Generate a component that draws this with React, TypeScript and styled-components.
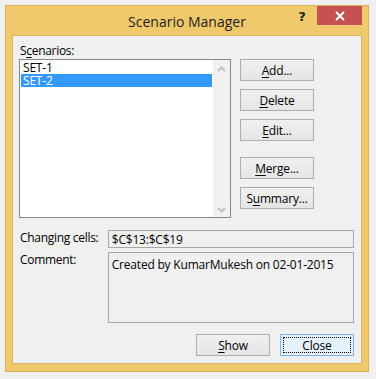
import React from 'react'
import styled, { createGlobalStyle } from 'styled-components'

const GlobalStyle = createGlobalStyle`
  html, body {
    margin: 0;
    padding: 0;
    background: #f0f0f0;
  }
  body {
    padding: 5px;
    font-family: 'Open Sans', 'Noto Sans', sans-serif;
    font-size: 12px;
    color: #000;
  }
`

const Window = styled.div`
  width: 364px;
  height: 367px;
  box-sizing: border-box;
  border: 1px solid #d8b155;
  background: #f0c96c;
  padding: 0 6px 7px 6px;
  display: flex;
  flex-direction: column;
`

const TitleBar = styled.div`
  height: 29px;
  display: flex;
  align-items: flex-start;
  position: relative;
`

const Title = styled.div`
  position: absolute;
  left: 0;
  right: 0;
  top: 6px;
  text-align: center;
  font-size: 14px;
  color: #1e1e1e;
`

const TitleButtons = styled.div`
  margin-left: auto;
  display: flex;
  align-items: flex-start;
  position: relative;
`

const HelpGlyph = styled.div`
  width: 30px;
  height: 19px;
  font-family: 'DejaVu Sans', sans-serif;
  font-weight: bold;
  font-size: 13px;
  line-height: 19px;
  text-align: center;
  color: #1e1e1e;
  margin-top: 1px;
  padding-left: 3px;
`

const CloseX = styled.div`
  width: 45px;
  height: 19px;
  background: #c75050;
  display: flex;
  align-items: center;
  justify-content: center;
`

const Client = styled.div`
  flex: 1;
  box-sizing: border-box;
  border: 1px solid #d9b563;
  background: #f0f0f0;
  padding: 7px 7px 0 6px;
  display: flex;
  flex-direction: column;
`

const Label = styled.div<{ $w?: number }>`
  line-height: 16px;
  white-space: nowrap;
  width: ${(p) => (p.$w ? `${p.$w}px` : 'auto')};
  padding-left: 1px;
  letter-spacing: -0.3px;
`

const Mn = styled.span`
  text-decoration: underline;
  text-underline-offset: 2px;
`

const TopRow = styled.div`
  display: flex;
  gap: 9px;
`

const ListBox = styled.div`
  width: 212px;
  height: 159px;
  box-sizing: border-box;
  border: 1px solid #828790;
  background: #fff;
  display: flex;
`

const ListItems = styled.div`
  flex: 1;
  padding: 1px 1px;
`

const ListItem = styled.div<{ $sel?: boolean }>`
  height: 13px;
  line-height: 13px;
  padding-left: 2px;
  letter-spacing: -0.2px;
  background: ${(p) => (p.$sel ? '#3399ff' : 'transparent')};
  color: ${(p) => (p.$sel ? '#fff' : '#000')};
`

const ScrollBar = styled.div`
  width: 17px;
  background: #f0f0f0;
  display: flex;
  flex-direction: column;
  justify-content: space-between;
  align-items: center;
  padding: 6px 0 4px;
`

const ButtonCol = styled.div`
  display: flex;
  flex-direction: column;
  gap: 8px;
`

const Btn = styled.div<{ $default?: boolean; $gapTop?: number }>`
  width: 74px;
  height: 22px;
  box-sizing: border-box;
  border: 1px solid ${(p) => (p.$default ? '#7eb4ea' : '#adadad')};
  background: ${(p) => (p.$default ? '#e5f1fb' : 'linear-gradient(#f0f0f0, #e5e5e5)')};
  display: flex;
  align-items: center;
  justify-content: center;
  position: relative;
  letter-spacing: -0.2px;
  margin-top: ${(p) => (p.$gapTop ? `${p.$gapTop}px` : '0')};
`

const FocusRect = styled.div`
  position: absolute;
  inset: 2px;
  border: 1px dotted #000;
`

const FieldRow = styled.div<{ $top: number }>`
  display: flex;
  margin-top: ${(p) => p.$top}px;
`

const Field = styled.div<{ $h: number }>`
  width: 247px;
  height: ${(p) => p.$h}px;
  box-sizing: border-box;
  border: 1px solid #a7a7a7;
  background: #f0f0f0;
  padding: 1px 3px;
  line-height: 15px;
  letter-spacing: -0.2px;
  white-space: nowrap;
`

const CommentText = styled.div`
  padding-top: 3px;
`

const Footer = styled.div`
  display: flex;
  justify-content: flex-end;
  gap: 10px;
  margin-top: 11px;
`

const Chevron: React.FC<{ up?: boolean }> = ({ up }) => (
  <svg width="9" height="6" viewBox="0 0 9 6">
    <path
      d={up ? 'M1 5 L4.5 1.5 L8 5' : 'M1 1 L4.5 4.5 L8 1'}
      fill="none"
      stroke="#c2c2c2"
      strokeWidth="2"
    />
  </svg>
)

export default function App() {
  return (
    <>
      <GlobalStyle />
      <Window>
        <TitleBar>
          <Title>Scenario Manager</Title>
          <TitleButtons>
            <HelpGlyph>?</HelpGlyph>
            <CloseX>
              <svg width="10" height="10" viewBox="0 0 10 10">
                <path d="M1 1 L9 9 M9 1 L1 9" stroke="#fff" strokeWidth="2" />
              </svg>
            </CloseX>
          </TitleButtons>
        </TitleBar>
        <Client>
          <Label>
            S<Mn>c</Mn>enarios:
          </Label>
          <TopRow>
            <ListBox>
              <ListItems>
                <ListItem>SET-1</ListItem>
                <ListItem $sel>SET-2</ListItem>
              </ListItems>
              <ScrollBar>
                <Chevron up />
                <Chevron />
              </ScrollBar>
            </ListBox>
            <ButtonCol>
              <Btn>
                <span>
                  <Mn>A</Mn>dd...
                </span>
              </Btn>
              <Btn>
                <span>
                  <Mn>D</Mn>elete
                </span>
              </Btn>
              <Btn>
                <span>
                  <Mn>E</Mn>dit...
                </span>
              </Btn>
              <Btn $gapTop={8}>
                <span>
                  <Mn>M</Mn>erge...
                </span>
              </Btn>
              <Btn>
                <span>
                  S<Mn>u</Mn>mmary...
                </span>
              </Btn>
            </ButtonCol>
          </TopRow>
          <FieldRow $top={12}>
            <Label $w={88}>Changing cells:</Label>
            <Field $h={18}>$C$13:$C$19</Field>
          </FieldRow>
          <FieldRow $top={4}>
            <Label $w={88}>Comment:</Label>
            <Field $h={71}>
              <CommentText>Created by KumarMukesh on 02-01-2015</CommentText>
            </Field>
          </FieldRow>
          <Footer>
            <Btn>
              <span>
                <Mn>S</Mn>how
              </span>
            </Btn>
            <Btn $default>
              <FocusRect />
              <span>Close</span>
            </Btn>
          </Footer>
        </Client>
      </Window>
    </>
  )
}
